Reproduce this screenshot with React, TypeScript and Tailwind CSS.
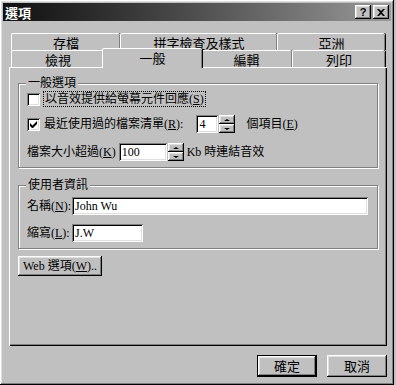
const raised =
  "shadow-[inset_-1px_-1px_#000,inset_1px_1px_#fff,inset_-2px_-2px_#808080,inset_2px_2px_#dfdfdf]";
const sunken =
  "shadow-[inset_1px_1px_#808080,inset_-1px_-1px_#fff,inset_2px_2px_#000,inset_-2px_-2px_#dfdfdf]";
const etched = "border border-[#808080] shadow-[inset_1px_1px_#fff,1px_1px_#fff]";

function Key({ k }: { k: string }) {
  return (
    <span>
      (<span className="underline underline-offset-1">{k}</span>)
    </span>
  );
}

function Tab({ label, w, selected }: { label: string; w: string; selected?: boolean }) {
  return (
    <div
      className={`${w} ${
        selected ? "relative z-10 h-[20px] -mx-[2px] -mt-[2px] -mb-px pt-[1px]" : "h-[17px] pt-[1px]"
      } flex justify-center rounded-t-[2px] border-l border-t border-white bg-[#c0c0c0] shadow-[inset_-1px_0_#808080,1px_0_#000] font-['Noto_Sans_CJK_TC',sans-serif] text-[13px] leading-[15px]`}
    >
      {label}
    </div>
  );
}

function Spinner() {
  return (
    <div className="flex h-[18px] w-[16px] flex-col">
      <div className={`flex flex-1 items-center justify-center ${raised}`}>
        <div className="h-0 w-0 border-x-[3px] border-b-[2px] border-x-transparent border-b-black" />
      </div>
      <div className={`flex flex-1 items-center justify-center ${raised}`}>
        <div className="h-0 w-0 border-x-[3px] border-t-[2px] border-x-transparent border-t-black" />
      </div>
    </div>
  );
}

function Check({ checked }: { checked?: boolean }) {
  return (
    <div className={`flex h-[13px] w-[13px] shrink-0 items-center justify-center bg-white ${sunken}`}>
      {checked && (
        <svg width="7" height="7" viewBox="0 0 7 7">
          <path d="M0 2v3l2 2h1l4-4V0L2.5 4.5z" fill="#000" />
        </svg>
      )}
    </div>
  );
}

export default function App() {
  return (
    <div className="h-[385px] w-[396px] bg-[#c0c0c0]">
      <div
        className={`flex h-[385px] w-[394px] flex-col bg-[#c0c0c0] p-[3px] font-['Liberation_Serif','Noto_Sans_CJK_TC',serif] text-[12px] text-black ${raised}`}
      >
        {/* title bar */}
        <div className="flex h-[18px] items-center bg-gradient-to-r from-[#101010] to-[#9a9a9a] px-[2px]">
          <span className="font-['Noto_Sans_CJK_TC',sans-serif] text-[13px] font-bold leading-none text-white">
            選項
          </span>
          <div className="ml-auto flex gap-[2px]">
            <div className={`flex h-[14px] w-[16px] items-center justify-center bg-[#c0c0c0] ${raised}`}>
              <span className="font-['Liberation_Sans',sans-serif] text-[11px] font-bold leading-none">?</span>
            </div>
            <div className={`flex h-[14px] w-[16px] items-center justify-center bg-[#c0c0c0] ${raised}`}>
              <svg width="8" height="7" viewBox="0 0 8 7">
                <path d="M0 0h2l2 2 2-2h2L5 3.5 8 7H6L4 5 2 7H0l3-3.5z" fill="#000" />
              </svg>
            </div>
          </div>
        </div>

        {/* tabs */}
        <div className="mt-[12px] ml-[6px] flex flex-col">
          <div className="flex pl-[2px]">
            <Tab label="存檔" w="w-[109px]" />
            <Tab label="拼字檢查及樣式" w="w-[157px]" />
            <Tab label="亞洲" w="w-[108px]" />
          </div>
          <div className="flex items-end pl-[2px]">
            <Tab label="檢視" w="w-[93px]" />
            <Tab label="一般" w="w-[100px]" selected />
            <Tab label="編輯" w="w-[92px]" />
            <Tab label="列印" w="w-[93px]" />
          </div>

          {/* panel */}
          <div className="flex h-[279px] w-[378px] flex-col border-l border-t border-white px-[8px] shadow-[inset_-1px_-1px_#000,inset_-2px_-2px_#808080]">
            {/* group 1 */}
            <div className={`relative mt-[15px] flex h-[85px] w-[360px] flex-col pl-[8px] pt-[6px] ${etched}`}>
              <span className="absolute -top-[8px] left-[7px] bg-[#c0c0c0] px-[2px] leading-[15px]">一般選項</span>
              <div className="flex h-[18px] items-center">
                <Check />
                <span className="ml-[3px] border border-dotted border-black px-[1px] leading-[14px]">
                  以音效提供給螢幕元件回應<Key k="S" />
                </span>
              </div>
              <div className="mt-[7px] flex h-[18px] items-center">
                <Check checked />
                <span className="ml-[4px] leading-[14px]">
                  最近使用過的檔案清單<Key k="R" />:
                </span>
                <div className={`ml-[13px] h-[18px] w-[22px] bg-white pl-[3px] pt-[2px] leading-[14px] ${sunken}`}>4</div>
                <div className="ml-px">
                  <Spinner />
                </div>
                <span className="ml-[11px] leading-[14px]">
                  個項目<Key k="E" />
                </span>
              </div>
              <div className="mt-[10px] flex h-[18px] items-center">
                <span className="leading-[14px]">
                  檔案大小超過<Key k="K" />
                </span>
                <div className={`ml-[3px] h-[18px] w-[48px] bg-white pl-[3px] pt-[2px] leading-[14px] ${sunken}`}>100</div>
                <div className="ml-px">
                  <Spinner />
                </div>
                <span className="ml-[3px] leading-[14px]">Kb 時連結音效</span>
              </div>
            </div>

            {/* group 2 */}
            <div className={`relative mt-[17px] flex h-[64px] w-[360px] flex-col pl-[8px] pt-[11px] ${etched}`}>
              <span className="absolute -top-[8px] left-[7px] bg-[#c0c0c0] px-[2px] leading-[15px]">使用者資訊</span>
              <div className="flex h-[18px] items-center">
                <span className="w-[45px] leading-[14px]">
                  名稱<Key k="N" />:
                </span>
                <div className={`h-[18px] w-[296px] bg-white pl-[3px] pt-[2px] leading-[14px] ${sunken}`}>John Wu</div>
              </div>
              <div className="mt-[9px] flex h-[18px] items-center">
                <span className="w-[45px] leading-[14px]">
                  縮寫<Key k="L" />:
                </span>
                <div className={`h-[18px] w-[71px] bg-white pl-[3px] pt-[2px] leading-[14px] ${sunken}`}>J.W</div>
              </div>
            </div>

            <div className={`mt-[7px] flex h-[20px] w-[84px] items-center justify-center leading-[14px] ${raised}`}>
              Web 選項<Key k="W" />..
            </div>
          </div>
        </div>

        {/* buttons */}
        <div className="mt-[9px] flex justify-end gap-[10px] pr-[4px] font-['Noto_Sans_CJK_TC',sans-serif] text-[13px]">
          <div className="h-[22px] w-[60px] border border-black">
            <div className={`flex h-full w-full items-center justify-center leading-[14px] ${raised}`}>確定</div>
          </div>
          <div className={`flex h-[22px] w-[60px] items-center justify-center leading-[14px] ${raised}`}>取消</div>
        </div>
      </div>
    </div>
  );
}
